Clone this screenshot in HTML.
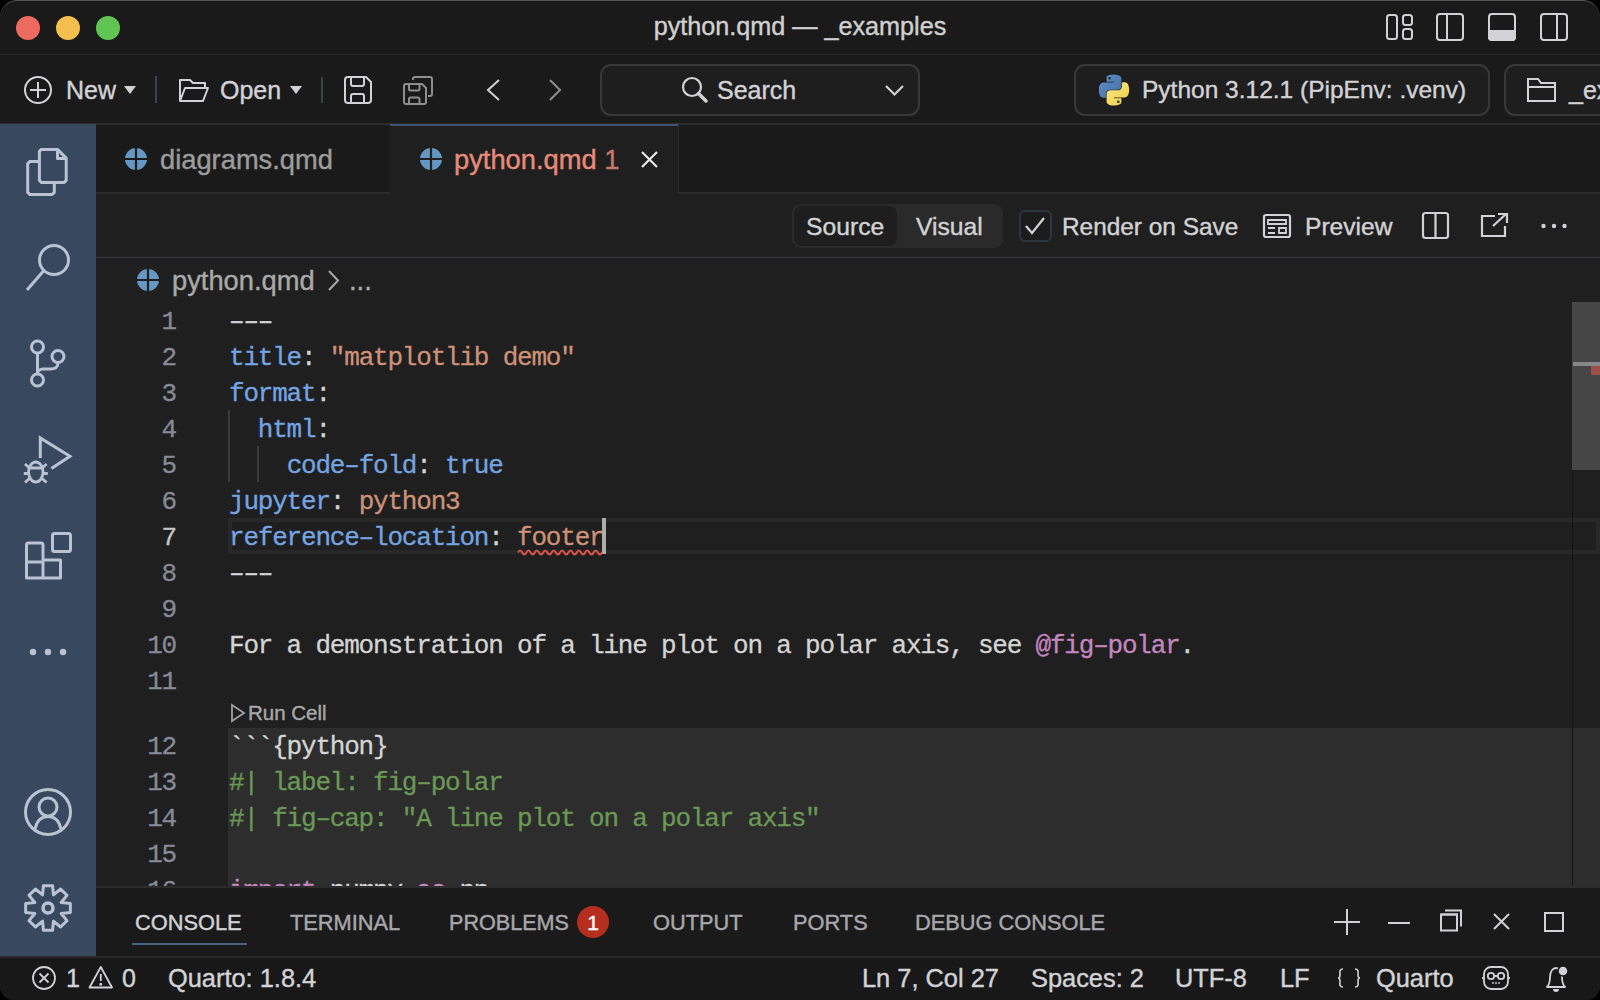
<!DOCTYPE html>
<html><head><meta charset="utf-8">
<style>
*{box-sizing:border-box;margin:0;padding:0}
html,body{width:1600px;height:1000px;overflow:hidden;background:#000}
body{font-family:"Liberation Sans",sans-serif;color:#cccccc;position:relative}
.abs{position:absolute}
svg{position:absolute;overflow:visible}
#win{position:absolute;left:0;top:0;width:1600px;height:1000px;background:#1a1a1a;border-radius:17px 17px 14px 14px;overflow:hidden}
#wborder{position:absolute;left:0;top:0;width:1600px;height:1000px;border-radius:17px 17px 14px 14px;border-top:1.5px solid #555555;pointer-events:none}
#titlebar{left:0;top:0;width:1600px;height:55px;background:#1a1a1a;border-bottom:1px solid #2c2c2c}
.tl{position:absolute;top:16px;width:24px;height:24px;border-radius:50%}
.t{position:absolute;white-space:pre;line-height:1;-webkit-text-stroke:0.4px currentColor;}
#toolbar{left:0;top:55px;width:1600px;height:69px;background:#1a1a1a;border-bottom:1px solid #2c2c2c}
.box{position:absolute;border:2px solid #383838;background:#1e1e1e;border-radius:11px}
#actbar{left:0;top:124px;width:96px;height:832px;background:#38485e}
#tabbar{left:96px;top:124px;width:1504px;height:70px;background:#1a1a1a;border-top:1px solid #2c2c2c;border-bottom:2px solid #2c2c2c}
#edtool{left:96px;top:194px;width:1504px;height:65px;background:#1f1f1f;border-bottom:2px solid #34383d}
#editor{left:96px;top:258px;width:1504px;height:628px;background:#1f1f1f;overflow:hidden}
#panel{left:96px;top:886px;width:1504px;height:70px;background:#1a1a1a;border-top:2px solid #2c2c2c}
#status{left:0;top:956px;width:1600px;height:44px;background:#181818;border-top:2px solid #2a2a2a}
.code{position:absolute;-webkit-text-stroke:0.3px currentColor;font-family:"Liberation Mono",monospace;font-size:26px;letter-spacing:-1.2px;white-space:pre;line-height:36px;color:#d4d4d4}
.k{color:#74a4e2}.w{color:#d4d4d4}.s{color:#ce9178}.m{color:#c586c0}.g{color:#6a9955}
.ln{position:absolute;-webkit-text-stroke:0.3px currentColor;left:96px;width:80px;text-align:right;font-family:"Liberation Mono",monospace;font-size:26px;letter-spacing:-1.2px;line-height:36px;color:#858b98}
</style></head><body>
<div id="win">
  <div id="titlebar" class="abs"></div>
  <div class="tl" style="left:16px;background:#ec6a5e"></div>
  <div class="tl" style="left:56px;background:#f4bf4f"></div>
  <div class="tl" style="left:96px;background:#61c554"></div>
  <div class="t" style="left:0;width:1600px;text-align:center;top:14.2px;font-size:25.2px;color:#d0d0d0">python.qmd — _examples</div>
  <!-- layout icons -->
  <svg style="left:0;top:0" width="1600" height="55" fill="none" stroke="#d2d2d6" stroke-width="2">
    <rect x="1387" y="15" width="10" height="24" rx="2.5"/>
    <rect x="1403" y="15" width="9" height="10" rx="2.5"/>
    <rect x="1403" y="29" width="9" height="10" rx="2.5"/>
    <rect x="1437" y="14" width="26" height="26" rx="3"/>
    <line x1="1447" y1="14" x2="1447" y2="40"/>
    <rect x="1489" y="14" width="26" height="26" rx="3"/>
    <path d="M1489 31 H1515 V37 a3 3 0 0 1 -3 3 H1492 a3 3 0 0 1 -3 -3 Z" fill="#d2d2d6"/>
    <rect x="1541" y="14" width="26" height="26" rx="3"/>
    <line x1="1557" y1="14" x2="1557" y2="40"/>
  </svg>

  <div id="toolbar" class="abs"></div>
  <!-- toolbar icons -->
  <svg style="left:0;top:0" width="1600" height="124" fill="none" stroke="#d2d2d6" stroke-width="2">
    <circle cx="38" cy="90" r="13"/>
    <line x1="38" y1="82" x2="38" y2="98"/><line x1="30" y1="90" x2="46" y2="90"/>
    <path d="M124 86 H136 L130 94 Z" fill="#d2d2d6" stroke="none"/>
    <line x1="156" y1="76" x2="156" y2="103" stroke="#3c424c"/>
    <path d="M180 101 V80 H190 L193 83 H205 V88 M180 101 L185 88 H208 L203 101 Z" stroke-linejoin="round"/>
    <path d="M290 86 H302 L296 94 Z" fill="#d2d2d6" stroke="none"/>
    <line x1="322" y1="77" x2="322" y2="103" stroke="#3c424c"/>
    <path d="M348 77 H366 L371 82 V100 a3 3 0 0 1 -3 3 H348 a3 3 0 0 1 -3 -3 V80 a3 3 0 0 1 3 -3 Z"/>
    <path d="M351 77 V84 a2 2 0 0 0 2 2 H362 a2 2 0 0 0 2 -2 V77"/>
    <path d="M351 103 V96 a2 2 0 0 1 2 -2 H362 a2 2 0 0 1 2 2 V103"/>
    <g stroke="#8e8e90">
      <path d="M406 84 H422 L426 88 V102 a2 2 0 0 1 -2 2 H406 a2 2 0 0 1 -2 -2 V86 a2 2 0 0 1 2 -2 Z"/>
      <path d="M409 84 V89 a1.5 1.5 0 0 0 1.5 1.5 H418 a1.5 1.5 0 0 0 1.5 -1.5 V84"/>
      <path d="M409 104 V99 a1.5 1.5 0 0 1 1.5 -1.5 H418 a1.5 1.5 0 0 1 1.5 1.5 V104"/>
      <path d="M413 80 V79 a2 2 0 0 1 2 -2 H430 a2 2 0 0 1 2 2 V94 a2 2 0 0 1 -2 2 H428"/>
    </g>
    <path d="M499 80 L488 90 L499 100"/>
    <path d="M550 80 L560 90 L550 100" stroke="#8e8e90"/>
  </svg>
  <div class="t" style="left:66px;top:77.8px;font-size:25px;color:#d2d2d6">New</div>
  <div class="t" style="left:220px;top:77.8px;font-size:25px;color:#d2d2d6">Open</div>
  <div class="box" style="left:600px;top:64px;width:320px;height:52px"></div>
  <svg style="left:0;top:0" width="1600" height="124" fill="none" stroke="#d2d2d6" stroke-width="2.2">
    <circle cx="692" cy="87" r="9"/>
    <line x1="698.5" y1="93.5" x2="706" y2="101" stroke-width="3.5" stroke-linecap="round"/>
    <path d="M886 86 L894.5 94.5 L903 86"/>
  </svg>
  <div class="t" style="left:717px;top:77.8px;font-size:25px;color:#d2d2d6">Search</div>
  <div class="box" style="left:1074px;top:64px;width:416px;height:52px"></div>
  <div class="box" style="left:1504px;top:64px;width:200px;height:52px"></div>
  <svg style="left:1097px;top:72.5px" width="34" height="34" viewBox="0 0 110 110"><defs><linearGradient id="pyb" x1="0" y1="0" x2="1" y2="1"><stop offset="0" stop-color="#5f90cf"/><stop offset="1" stop-color="#44709f"/></linearGradient><linearGradient id="pyy" x1="0" y1="0" x2="1" y2="1"><stop offset="0" stop-color="#f7ea8e"/><stop offset="1" stop-color="#efcc40"/></linearGradient></defs>
    <path fill="url(#pyb)" d="M54 5c-25 0-23 11-23 11v12h24v3H22S6 29 6 55s14 25 14 25h9V68s0-14 14-14h23s13 0 13-13V19S81 5 54 5zm-13 8a4 4 0 1 1 0 8 4 4 0 0 1 0-8z"/>
    <path fill="url(#pyy)" d="M56 105c25 0 23-11 23-11V82H55v-3h33s16 2 16-24-14-25-14-25h-9v12s0 14-14 14H44s-13 0-13 13v22s-2 14 25 14zm13-8a4 4 0 1 1 0-8 4 4 0 0 1 0 8z"/>
  </svg>
  <div class="t" style="left:1142px;top:78.2px;font-size:24.5px;color:#d2d2d6">Python 3.12.1 (PipEnv: .venv)</div>
  <svg style="left:0;top:0" width="1600" height="124" fill="none" stroke="#d2d2d6" stroke-width="2">
    <path d="M1528 79 H1538 L1541 83 H1555 V101 H1528 Z M1528 87 H1555"/>
  </svg>
  <div class="t" style="left:1569px;top:77.8px;font-size:25px;color:#d2d2d6">_ex</div>


  <div id="actbar" class="abs"></div>
  <svg style="left:0;top:0" width="96" height="1000" fill="none" stroke="#b9c3d3" stroke-width="3" stroke-linejoin="round">
    <!-- files -->
    <path d="M39.4 161.6 H29.7 L27.7 163.6 V192.4 L29.7 194.4 H52.3 L54.3 192.4 V182.4"/>
    <path d="M41.4 149.4 H57.5 L66.2 158.1 V180.4 L64.2 182.4 H41.4 L39.4 180.4 V151.4 Z"/>
    <path d="M57.5 149.4 V158.6 H66.2"/>
    <!-- search -->
    <circle cx="54" cy="260" r="14.5"/>
    <line x1="43.5" y1="271" x2="27" y2="290"/>
    <!-- scm -->
    <circle cx="37.5" cy="347" r="6"/>
    <circle cx="58" cy="356.5" r="6"/>
    <circle cx="37.5" cy="380" r="6"/>
    <path d="M37.5 353 V374 M58 362.5 C58 368 55 369 50 369 H43 C40 369 37.5 371 37.5 374"/>
    <!-- debug -->
    <path d="M40.3 458 V438 L70 456.2 L51.4 468.5" stroke-linejoin="miter"/>
    <g stroke-width="2.8">
      <ellipse cx="35.8" cy="472" rx="7.2" ry="10"/>
      <path d="M28.6 468 H43 M25 464 L30 468.5 M46.6 464 L41.6 468.5 M23.8 473.5 H28.6 M43 473.5 H47.8 M25 482.5 L30 478 M46.6 482.5 L41.6 478"/>
    </g>
    <!-- extensions -->
    <path d="M26.5 562 V578 H60.5 V560 H43 V545 a2 2 0 0 0 -2 -2 H28.5 a2 2 0 0 0 -2 2 V562 H43 V578"/>
    <rect x="52.5" y="533.5" width="18" height="18" rx="2"/>
    <!-- account -->
    <circle cx="48" cy="812" r="22.5"/>
    <circle cx="48" cy="807" r="9"/>
    <path d="M35 829 C37 820 42 816.5 48 816.5 C54 816.5 59 820 61 829"/>
  </svg>
  <svg style="left:0;top:0" width="96" height="1000">
    <circle cx="33" cy="652" r="3.2" fill="#b9c3d3"/><circle cx="48" cy="652" r="3.2" fill="#b9c3d3"/><circle cx="63" cy="652" r="3.2" fill="#b9c3d3"/>
    <g transform="translate(48 908)" fill="none" stroke="#b9c3d3" stroke-width="3" stroke-linejoin="round">
      <path d="M-4.55 -22.34 L4.55 -22.34 L5.43 -13.12 L12.58 -19.01 L19.01 -12.58 L13.12 -5.43 L22.34 -4.55 L22.34 4.55 L13.12 5.43 L19.01 12.58 L12.58 19.01 L5.43 13.12 L4.55 22.34 L-4.55 22.34 L-5.43 13.12 L-12.58 19.01 L-19.01 12.58 L-13.12 5.43 L-22.34 4.55 L-22.34 -4.55 L-13.12 -5.43 L-19.01 -12.58 L-12.58 -19.01 L-5.43 -13.12 Z"/>
      <circle r="5" stroke-width="3.5"/>
    </g>
  </svg>

  <div id="tabbar" class="abs"></div>
  <div class="abs" style="left:96px;top:124px;width:295px;height:70px;background:#1a1a1a;border-right:1px solid #2c2c2c;border-top:1px solid #2c2c2c;border-bottom:2px solid #2c2c2c"></div>
  <div class="abs" style="left:390px;top:124px;width:288px;height:70px;background:#1f1f1f;border-top:2px solid #3f5372"></div>
  <div class="abs" style="left:678px;top:124px;width:1px;height:69px;background:#2c2c2c"></div>
  <svg style="left:125px;top:148px" width="22" height="22" viewBox="-11 -11 22 22"><circle r="11" fill="#6498c2"/><path d="M0 -11 V11 M-11 0 H11" stroke="#1a1a1a" stroke-width="2.2"/></svg>
  <div class="t" style="left:160px;top:146px;font-size:27.3px;transform:none;color:#9c9c9c">diagrams.qmd</div>
  <svg style="left:420px;top:148px" width="22" height="22" viewBox="-11 -11 22 22"><circle r="11" fill="#6498c2"/><path d="M0 -11 V11 M-11 0 H11" stroke="#1f1f1f" stroke-width="2.2"/></svg>
  <div class="t" style="left:454px;top:146px;font-size:27.3px;transform:none;color:#e68b7a">python.qmd <span style="color:#c87868">1</span></div>
  <svg style="left:0;top:0" width="1600" height="200" stroke="#e8e8e8" stroke-width="2.2"><path d="M642 152 L657 167 M657 152 L642 167"/></svg>

  <div id="edtool" class="abs"></div>
  <div class="abs" style="left:792px;top:204px;width:211px;height:44px;background:#2a2a2a;border-radius:9px"></div>
  <div class="abs" style="left:794px;top:206px;width:103px;height:40px;background:#1e1e1e;border-radius:8px"></div>
  <div class="t" style="left:806px;top:214.5px;font-size:24.7px;color:#d2d2d6">Source</div>
  <div class="t" style="left:916px;top:214.5px;font-size:24.7px;color:#d2d2d6">Visual</div>
  <div class="abs" style="left:1019px;top:210px;width:33px;height:32px;border:2px solid #2f3540;border-radius:6px;background:#1c1c1c"></div>
  <svg style="left:0;top:0" width="1600" height="260" fill="none" stroke="#d2d2d6" stroke-width="2.2">
    <path d="M1026 226 L1032 233 L1044 218"/>
    <rect x="1264" y="215" width="26" height="22" rx="2"/>
    <path d="M1268 220 H1286 V224 H1268 Z M1268 228 H1275 M1268 233 H1275 M1279 228 H1286 V233 H1279 Z" stroke-width="1.8"/>
    <rect x="1423" y="213" width="25" height="25" rx="2.5"/>
    <line x1="1435.5" y1="213" x2="1435.5" y2="238"/>
    <path d="M1495 216 H1482 V236 H1505 V226 M1493 226 L1506 214 M1498 214 H1507 V223"/>
  </svg>
  <svg style="left:0;top:0" width="1600" height="260" fill="#d2d2d6">
    <circle cx="1543.5" cy="226" r="2.2"/><circle cx="1554" cy="226" r="2.2"/><circle cx="1564.5" cy="226" r="2.2"/>
  </svg>
  <div class="t" style="left:1062px;top:214.5px;font-size:24.4px;color:#d2d2d6">Render on Save</div>
  <div class="t" style="left:1305px;top:214.5px;font-size:24.6px;color:#d2d2d6">Preview</div>

  <div id="editor" class="abs"></div>
  <svg style="left:137px;top:269px" width="22" height="22" viewBox="-11 -11 22 22"><circle r="11" fill="#6498c2"/><path d="M0 -11 V11 M-11 0 H11" stroke="#1f1f1f" stroke-width="2.2"/></svg>
  <div class="t" style="left:172px;top:266.5px;font-size:27.3px;transform:none;color:#a9a9a9">python.qmd</div>
  <svg style="left:0;top:0" width="1600" height="300" fill="none" stroke="#a9a9a9" stroke-width="2"><path d="M329 271 L338 280.5 L329 290"/></svg>
  <div class="t" style="left:349px;top:266.5px;font-size:27.3px;transform:none;color:#a9a9a9">...</div>
  <div class="abs" style="left:228px;top:728px;width:1372px;height:160px;background:#2d2d2d"></div>
  <div class="abs" style="left:228px;top:518px;width:1372px;height:36px;border:4px solid #282828;border-right-width:4px"></div>
  <div class="abs" style="left:228px;top:410px;width:2px;height:72px;background:#3a3a3a"></div>
  <div class="abs" style="left:257px;top:446px;width:2px;height:36px;background:#3a3a3a"></div>
  <div class="ln" style="top:304px;color:#858b98">1</div>
  <div class="code" style="left:229px;top:304px"><span class="w">–––</span></div>
  <div class="ln" style="top:340px;color:#858b98">2</div>
  <div class="code" style="left:229px;top:340px"><span class="k">title</span><span class="w">: </span><span class="s">&quot;matplotlib demo&quot;</span></div>
  <div class="ln" style="top:376px;color:#858b98">3</div>
  <div class="code" style="left:229px;top:376px"><span class="k">format</span><span class="w">:</span></div>
  <div class="ln" style="top:412px;color:#858b98">4</div>
  <div class="code" style="left:229px;top:412px"><span class="w">  </span><span class="k">html</span><span class="w">:</span></div>
  <div class="ln" style="top:448px;color:#858b98">5</div>
  <div class="code" style="left:229px;top:448px"><span class="w">    </span><span class="k">code–fold</span><span class="w">: </span><span class="k">true</span></div>
  <div class="ln" style="top:484px;color:#858b98">6</div>
  <div class="code" style="left:229px;top:484px"><span class="k">jupyter</span><span class="w">: </span><span class="s">python3</span></div>
  <div class="ln" style="top:520px;color:#c6c6c6">7</div>
  <div class="code" style="left:229px;top:520px"><span class="k">reference–location</span><span class="w">: </span><span class="s">footer</span></div>
  <div class="ln" style="top:556px;color:#858b98">8</div>
  <div class="code" style="left:229px;top:556px"><span class="w">–––</span></div>
  <div class="ln" style="top:592px;color:#858b98">9</div>
  <div class="ln" style="top:628px;color:#858b98">10</div>
  <div class="code" style="left:229px;top:628px"><span class="w">For a demonstration of a line plot on a polar axis, see </span><span class="m">@fig–polar</span><span class="w">.</span></div>
  <div class="ln" style="top:664px;color:#858b98">11</div>
  <div class="ln" style="top:728.5px;color:#858b98">12</div>
  <div class="code" style="left:229px;top:728.5px"><span class="w">```{python}</span></div>
  <div class="ln" style="top:764.5px;color:#858b98">13</div>
  <div class="code" style="left:229px;top:764.5px"><span class="g">#| label: fig–polar</span></div>
  <div class="ln" style="top:800.5px;color:#858b98">14</div>
  <div class="code" style="left:229px;top:800.5px"><span class="g">#| fig–cap: &quot;A line plot on a polar axis&quot;</span></div>
  <div class="ln" style="top:836.5px;color:#858b98">15</div>
  <div class="ln" style="top:872.5px;color:#858b98">16</div>
  <div class="code" style="left:229px;top:872.5px"><span class="m">import</span><span class="w"> numpy </span><span class="m">as</span><span class="w"> np</span></div>
  <svg style="left:0;top:0" width="400" height="800" fill="none" stroke="#a0a0a0" stroke-width="1.8"><path d="M232 705 L244 713 L232 721 Z"/></svg>
  <div class="t" style="left:248px;top:702.6px;font-size:20.5px;color:#a8a8a8">Run Cell</div>
  <div class="abs" style="left:602px;top:518px;width:4px;height:36px;background:#aeafad"></div>
  <svg style="left:0;top:0" width="700" height="600" fill="none" stroke="#e0524a" stroke-width="2"><path d="M518 552.5 q2.1 -4 4.2 0 q2.1 4 4.2 0 q2.1 -4 4.2 0 q2.1 4 4.2 0 q2.1 -4 4.2 0 q2.1 4 4.2 0 q2.1 -4 4.2 0 q2.1 4 4.2 0 q2.1 -4 4.2 0 q2.1 4 4.2 0 q2.1 -4 4.2 0 q2.1 4 4.2 0 q2.1 -4 4.2 0 q2.1 4 4.2 0 q2.1 -4 4.2 0 q2.1 4 4.2 0 q2.1 -4 4.2 0 q2.1 4 4.2 0 q2.1 -4 4.2 0 q2.1 4 4.2 0"/></svg>
  <div class="abs" style="left:1572px;top:302px;width:1px;height:584px;background:#141414"></div>
  <div class="abs" style="left:1572px;top:302px;width:28px;height:168px;background:#464646"></div>
  <div class="abs" style="left:1573px;top:362px;width:27px;height:4px;background:#878787"></div>
  <div class="abs" style="left:1591px;top:366px;width:9px;height:9px;background:#9b5047"></div>
  <div id="panel" class="abs"></div>
  <div class="t" style="left:135px;top:912.1px;font-size:21.8px;color:#d2d2d6">CONSOLE</div>
  <div class="abs" style="left:132px;top:943px;width:115px;height:2px;background:#4a6080"></div>
  <div class="t" style="left:290px;top:912.1px;font-size:21.8px;color:#a8a8ac">TERMINAL</div>
  <div class="t" style="left:449px;top:912.1px;font-size:21.6px;color:#a8a8ac">PROBLEMS</div>
  <div class="abs" style="left:577px;top:906px;width:32px;height:32px;border-radius:50%;background:#b52f1e"></div>
  <div class="t" style="left:577px;top:912px;width:32px;text-align:center;font-size:21px;color:#ffffff">1</div>
  <div class="t" style="left:653px;top:912.1px;font-size:21.8px;color:#a8a8ac">OUTPUT</div>
  <div class="t" style="left:793px;top:912.1px;font-size:21.8px;color:#a8a8ac">PORTS</div>
  <div class="t" style="left:915px;top:912.1px;font-size:21.8px;color:#a8a8ac">DEBUG CONSOLE</div>
  <svg style="left:0;top:0" width="1600" height="1000" fill="none" stroke="#d2d2d6" stroke-width="2">
    <path d="M1347 909 V935 M1334 922 H1360"/>
    <path d="M1388 923 H1410"/>
    <path d="M1441 914.5 H1457 V930.5 M1445 910.5 H1461 V926.5" />
    <rect x="1441" y="914.5" width="16" height="16"/>
    <path d="M1494 914 L1509 929 M1509 914 L1494 929"/>
    <rect x="1545" y="913" width="18" height="18"/>
  </svg>
  <div id="status" class="abs"></div>
  <svg style="left:0;top:0" width="1600" height="1000" fill="none" stroke="#d2d2d6" stroke-width="1.8">
    <circle cx="44" cy="978" r="11"/>
    <path d="M39.5 973.5 L48.5 982.5 M48.5 973.5 L39.5 982.5"/>
    <path d="M100.8 967 L112 987.5 H89.5 Z" stroke-linejoin="round"/>
    <path d="M100.8 974 V981" />
    <circle cx="100.8" cy="984.3" r="0.6" fill="#d2d2d6"/>
    <path d="M1343 969 C1339 969 1340 972 1340 975 C1340 977 1339 978 1338 978 C1339 978 1340 979 1340 981 C1340 984 1339 987 1343 987 M1355 969 C1359 969 1358 972 1358 975 C1358 977 1359 978 1360 978 C1359 978 1358 979 1358 981 C1358 984 1359 987 1355 987" stroke-width="1.6"/>
    <rect x="1484" y="967" width="24" height="22" rx="7"/>
    <circle cx="1491" cy="976" r="3.2"/><circle cx="1501" cy="976" r="3.2"/>
    <path d="M1494 976 H1498 M1484 978 H1482 M1508 978 H1510" />
    <path d="M1547 987 H1565 C1562 984 1562 981 1562 977 C1562 971 1559 968 1556 968 C1553 968 1550 971 1550 977 C1550 981 1550 984 1547 987 Z" stroke-linejoin="round"/>
  </svg>
  <svg style="left:0;top:0" width="1600" height="1000" fill="#d2d2d6">
    <circle cx="1563" cy="971" r="5" stroke="#181818" stroke-width="1.5"/>
    <path d="M1553 989 a3 3 0 0 0 6 0 Z"/>
    <circle cx="1493" cy="983" r="0.9"/><circle cx="1496" cy="983" r="0.9"/><circle cx="1499" cy="983" r="0.9"/>
  </svg>
  <div class="t" style="left:66px;top:966.3px;font-size:25px;color:#d2d2d6">1</div>
  <div class="t" style="left:122px;top:966.3px;font-size:25px;color:#d2d2d6">0</div>
  <div class="t" style="left:168px;top:966.3px;font-size:25.4px;color:#d2d2d6">Quarto: 1.8.4</div>
  <div class="t" style="left:862px;top:966.3px;font-size:25.4px;color:#d2d2d6">Ln 7, Col 27</div>
  <div class="t" style="left:1031px;top:966.3px;font-size:25.4px;color:#d2d2d6">Spaces: 2</div>
  <div class="t" style="left:1175px;top:966.3px;font-size:25.4px;color:#d2d2d6">UTF-8</div>
  <div class="t" style="left:1280px;top:966.3px;font-size:25.4px;color:#d2d2d6">LF</div>
  <div class="t" style="left:1376px;top:966.3px;font-size:25.4px;color:#d2d2d6">Quarto</div>
<div id="wborder"></div>
</div>
</body></html>
